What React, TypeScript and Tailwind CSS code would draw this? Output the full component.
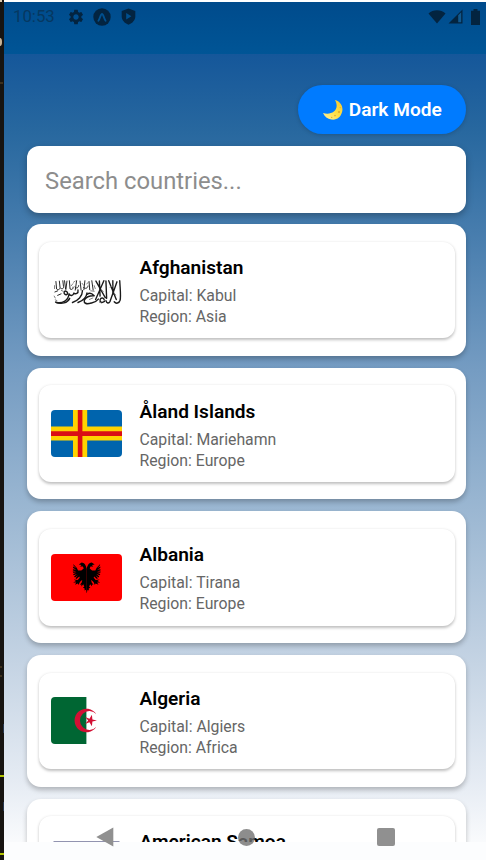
import React from "react";
import { MdSettings } from "react-icons/md";

function AfghanistanFlag() {
  return (
    <svg className="h-[47px] w-[71px]" viewBox="0 0 71 47">
      <rect width="71" height="47" rx="4" fill="#fff" />
      <g
        transform="translate(-4.4 3.6) scale(.345 .375)"
        fill="none"
        stroke="#1a1a1a"
        strokeLinecap="round"
        strokeLinejoin="round"
      >
        <g strokeWidth="4">
          <path d="M212 27c1 20 4 42 1 52c-3 9-12 10-17 4" />
          <path d="M204 30L184 82c-4 7-10 5-12-2M180 27l22 50M192 27v36" />
          <path d="M172 28l2 46M166 27l-24 50M143 28l27 44M153 28l2 40" />
          <path d="M168 82c-8 5-14 3-13-4c2-7 11-6 12 0" />
          <path d="M150 76c-8 10-16 9-27 12c-8 1-15-1-14-8c3-9 16-14 29-13c-7-7-14-9-20-4" />
          <path d="M117 60c-2 13-14 21-26 25M104 54c0 14-13 26-29 31" />
          <path d="M91 52c2 9-7 12-12 8c-2 8-10 8-14 2c-2 17-18 27-37 23" />
          <path d="M67 74c-6 12-24 17-41 10M60 58c-5-6-11-3-9 3c3 5 10 4 10-1" />
        </g>
        <g strokeWidth="2.6">
          <path d="M27 29l2 20c5 4 10 1 10-4l-2-17M41 47c5 4 9 0 8-5l-2-15M52 27l3 22M59 28l-3 22" />
          <path d="M66 27l2 22c5 3 10 0 9-5M87 27l-4 25M82 44c5 5 10 2 11-4M97 28l3 24" />
          <path d="M111 27l-3 24M107 45c6 5 12 2 13-4M123 29l2 22M131 27l4 25M24 57l8-3M32 66l10-4" />
          <path
            d="M124 77l10-4M78 31l5-3M25 78l5 2M128 54l10 1M184 44l10-4M153 84l5 2M43 53l5 2M23 40v8M22 68l3 5M72 40l4-5M103 34l4 5M116 36l5-5M138 40l3 8M160 52l4 4M196 60l4 5"
            stroke="#777"
          />
        </g>
      </g>
    </svg>
  );
}

function AlandFlag() {
  return (
    <svg className="h-[47px] w-[71px] rounded-[4px]" viewBox="0 0 71 47">
      <rect width="71" height="47" fill="#0064ad" />
      <path d="M22 0h14.2v47H22zM0 16.4h71v14.2H0z" fill="#ffd300" />
      <path d="M26.8 0h4.6v47h-4.6zM0 21.2h71v4.8H0z" fill="#da0e15" />
    </svg>
  );
}

function AlbaniaFlag() {
  const wing =
    "M0-8.5C-1-13-2.5-14.5-5-14.8L-8-12.8-5.2-12.4-6.6-10.8-3.8-11-3-8.8-5.4-6.8-8.6-7-10-9.6-13.5-13.4-13-11.6-10.4-9.2-13.6-10.8-13.6-9.4-10.4-7.6-13.8-8.2-13.8-7-10.4-6-14-6-13.6-4.6-10.2-4.6-13.6-3.4-13-2.2-9.8-3.4-12.6-1-11.8.2-8.8-2.2-11.2.8-10.2 1.6-7.4-1-7 .4-9 2.6-13 2-10.6 3.6-13.6 5.2-10.4 5.2-11.8 7.4-8.8 6-8.2 7.6-6.8 4.6-4.4 2.4-5 5-6.8 7.4-5.2 7-5.4 9-3.4 6.8-2.4 9.4-3.8 10-2 11-2.2 13-.8 12.4 0 16z";
  return (
    <svg className="h-[47px] w-[71px] rounded-[4px]" viewBox="0 0 71 47">
      <rect width="71" height="47" fill="#f00" />
      <g transform="translate(35.7 23.4)">
        <path d={wing} />
        <path d={wing} transform="scale(-1 1)" />
      </g>
    </svg>
  );
}

function AlgeriaFlag() {
  return (
    <svg className="h-[47px] w-[71px] rounded-[4px]" viewBox="0 0 71 47">
      <rect width="71" height="47" fill="#fff" />
      <rect width="35.4" height="47" fill="#006633" />
      <path
        d="M45.4 17.3A11.8 11.8 0 1 0 45.4 29.7A9.4 9.4 0 1 1 45.4 17.3Z"
        fill="#d21034"
      />
      <path
        d="M46 23.5l-4.6 1.1-.5 4.7-2.4-4-4.4 1.8 3.1-3.6-3.1-3.6 4.4 1.8 2.4-4 .5 4.7z"
        fill="#d21034"
      />
    </svg>
  );
}

function SamoaFlag() {
  return (
    <svg className="h-[47px] w-[71px]" viewBox="0 0 71 47">
      <rect x="2.5" y="0" width="66" height="46" fill="#9294b0" />
    </svg>
  );
}

type Country = {
  name: string;
  capital?: string;
  region?: string;
  Flag: () => React.JSX.Element;
};

const countries: Country[] = [
  { name: "Afghanistan", capital: "Kabul", region: "Asia", Flag: AfghanistanFlag },
  { name: "Åland Islands", capital: "Mariehamn", region: "Europe", Flag: AlandFlag },
  { name: "Albania", capital: "Tirana", region: "Europe", Flag: AlbaniaFlag },
  { name: "Algeria", capital: "Algiers", region: "Africa", Flag: AlgeriaFlag },
  { name: "American Samoa", Flag: SamoaFlag },
];

function CountryCard({ name, capital, region, Flag }: Country) {
  return (
    <li className="h-[131.6px] shrink-0 rounded-[14px] bg-white px-[11.5px] py-[17.5px] shadow-[0_3px_5px_rgba(0,0,0,0.24)]">
      <div className="flex h-[96.6px] items-center gap-[17.5px] rounded-[12px] bg-white px-[12.5px] shadow-[0_1.5px_3px_rgba(0,0,0,0.25)]">
        <Flag />
        <div className="min-h-[75px] pt-[2.4px]">
          <h2 className="text-[19.1px] leading-[25px] font-semibold text-black">{name}</h2>
          {capital && (
            <p className="mt-[5px] text-[15.8px] leading-[21px] text-[#666]">Capital: {capital}</p>
          )}
          {region && <p className="text-[15.8px] leading-[21px] text-[#666]">Region: {region}</p>}
        </div>
      </div>
    </li>
  );
}

function StatusBar() {
  return (
    <header className="flex h-[52px] shrink-0 items-start justify-between bg-linear-to-b from-[#004b8c] to-[#005596] pt-[5px] pr-[6px] pl-[9px] text-[#032440]">
      <div className="flex h-[19px] items-center">
        <span className="w-[54px] text-[16.8px] leading-[19px] text-[#063861]">10:53</span>
        <MdSettings className="size-[18px]" />
        <svg className="ml-[8px] size-[18px]" viewBox="0 0 18 18">
          <circle cx="9" cy="9" r="8.7" fill="currentColor" />
          <path
            d="M5.4 12.8C7 10.8 7.6 6 9 6s2 4.8 3.6 6.8"
            fill="none"
            stroke="#00508f"
            strokeWidth="1.8"
            strokeLinecap="round"
          />
        </svg>
        <svg className="ml-[10px] h-[17px] w-[15px]" viewBox="0 0 15 17">
          <path d="M7.5.5l6.8 2.6v5.2c0 3.8-2.8 7-6.8 8.4C3.5 15.3.7 12.1.7 8.3V3.1z" fill="currentColor" />
          <path d="M5.2 5l5.2 3.2-5.2 3.2z" fill="#00508f" />
        </svg>
      </div>
      <div className="flex h-[19px] items-center">
        <svg className="h-[15px] w-[18px]" viewBox="0 0 18 15">
          <path d="M.5 4.4C5.2.1 12.8.1 17.5 4.4L9 14.6z" fill="currentColor" />
        </svg>
        <svg className="ml-[2px] size-[15px]" viewBox="0 0 15 15">
          <path d="M14.5.5v14H.5z" fill="currentColor" />
          <path d="M10.2 6.2l3-3v10h-3z" fill="#11598f" />
        </svg>
        <svg className="ml-[8px] h-[16px] w-[9px]" viewBox="0 0 9 16">
          <path d="M2.5 0h4v1.7H9V16H0V1.7h2.5z" fill="currentColor" />
        </svg>
      </div>
    </header>
  );
}

function MoonIcon() {
  return (
    <svg className="mt-[2px] size-[20px]" viewBox="0 0 20 20">
      <defs>
        <linearGradient id="moon" x1="0" y1="1" x2="1" y2="0">
          <stop offset="0" stopColor="#fff0a0" />
          <stop offset="0.5" stopColor="#ffe045" />
          <stop offset="1" stopColor="#f4c72e" />
        </linearGradient>
      </defs>
      <path d="M12 0C17.3 1.4 20.4 6.1 19.2 11.6C17.9 17.5 13.5 20.4 8.3 19.6C4.6 19 1.6 16.6 0 13C8.6 15.6 17.4 10.2 12 0Z" fill="url(#moon)" />
      <g fill="#dfac29">
        <circle cx="16" cy="12" r="1.1" />
        <circle cx="12" cy="15.6" r=".8" />
        <circle cx="8.7" cy="17.4" r=".7" />
        <circle cx="17.2" cy="7.6" r=".6" />
      </g>
    </svg>
  );
}

function EditorEdge() {
  return (
    <svg className="h-[860px] w-[4px] shrink-0" viewBox="0 0 4 860">
      <rect width="4" height="860" fill="#171411" />
      <rect width="2" height="2" fill="#d8c8b0" />
      <ellipse cx="0" cy="42" rx="2" ry="4" fill="#c9b496" />
      <path d="M0 83h3M0 667h2M0 676h2" stroke="#4b3a22" strokeWidth="1.4" />
      <path d="M0 776h4M0 854h4" stroke="#b3c400" strokeWidth="2" />
      <path d="M3.5 724v9M3.5 802v9" stroke="#26364e" />
    </svg>
  );
}

export default function App() {
  return (
    <div className="flex h-[860px] w-[486px] overflow-hidden bg-white font-[Roboto,sans-serif]">
      <EditorEdge />
      <div className="relative flex h-full flex-1 flex-col overflow-hidden border-t-2 border-white bg-[linear-gradient(to_bottom,#10508f_0px,#15579a_52px,#28689f_130px,#467cad_228px,#759cc2_368px,#9bb7d2_508px,#c1d1e2_648px,#e5ebf3_778px,#ffffff_858px)]">
        <StatusBar />
        <main className="flex h-[788px] shrink-0 flex-col overflow-hidden pt-[30.5px] pr-[20px] pl-[23px]">
          <button className="flex h-[49px] w-[168px] shrink-0 items-center justify-center gap-[5.5px] self-end rounded-full bg-[#007bff] pl-[1px] text-[19.1px] font-semibold text-white shadow-[0_1px_4px_rgba(0,0,0,0.18)]">
            <MoonIcon />
            <span className="pt-[2px]">Dark Mode</span>
          </button>
          <input
            className="mt-[12px] h-[67.6px] shrink-0 rounded-[12px] bg-white px-[18px] pt-[3px] text-[23.8px] shadow-[0_3px_7px_rgba(0,0,0,0.28)] outline-none placeholder:text-[#8d8d8d]"
            placeholder="Search countries..."
          />
          <ul className="mt-[11.2px] flex flex-col gap-[12px]">
            {countries.map((country) => (
              <CountryCard key={country.name} {...country} />
            ))}
          </ul>
        </main>
        <div className="flex-1 bg-[#fcfdfe]" />
        <nav className="absolute inset-x-0 top-[822px] flex h-[26px] items-center text-[#909090]">
          <svg className="ml-[92px] h-[20px] w-[18px]" viewBox="0 0 18 20" fill="currentColor">
            <path d="M17.3.6v18.8L.3 10z" />
          </svg>
          <span className="ml-[124px] size-[17px] rounded-full bg-[#707070]/80" />
          <span className="ml-[122px] size-[18px] rounded-[2px] bg-[#909090]" />
        </nav>
      </div>
    </div>
  );
}
